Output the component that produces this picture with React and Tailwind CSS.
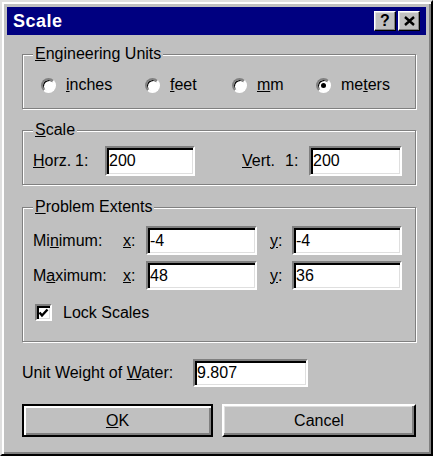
import React from 'react';

// Win95-style "Scale" dialog
const sunken =
  'border-2 border-t-[#808080] border-l-[#808080] border-r-white border-b-white shadow-[inset_2px_2px_0_#000,inset_-1px_-1px_0_#dfdfdf]';

const Radio = ({ checked, width, children }) => (
  <div className={`flex shrink-0 items-center ${width}`}>
    <span className="flex h-[15px] w-[15px] items-center justify-center rounded-full border-2 border-t-[#808080] border-l-[#808080] border-r-white border-b-white bg-white shadow-[inset_1px_1px_0_#000]">
      {checked && <span className="h-[5px] w-[5px] rounded-full bg-black" />}
    </span>
    <span className="ml-[10px]">{children}</span>
  </div>
);

const Field = ({ value, width, height = 'h-[29px]' }) => (
  <input
    type="text"
    defaultValue={value}
    className={`${width} ${height} ${sunken} shrink-0 bg-white pl-[2px] text-[16px] leading-none text-black outline-none`}
  />
);

const Group = ({ title, className, children }) => (
  <fieldset
    className={`w-[394px] border border-[#808080] pl-[10px] shadow-[1px_1px_0_#fff,inset_1px_1px_0_#fff] ${className}`}
  >
    <legend className="bg-[#c0c0c0] px-[2px] leading-[18px]">{title}</legend>
    {children}
  </fieldset>
);

const TitleButton = ({ children }) => (
  <div className="flex h-[20px] w-[22px] items-center justify-center border border-t-white border-l-white border-r-black border-b-black bg-[#c0c0c0] shadow-[inset_-1px_-1px_0_#808080,inset_1px_1px_0_#dfdfdf]">
    {children}
  </div>
);

export default function App() {
  return (
    <div className="min-h-screen bg-white font-['Liberation_Sans',Arial,sans-serif] text-[16px] text-black">
      <div className="flex h-[456px] w-[433px] flex-col border-2 border-t-[#dfdfdf] border-l-[#dfdfdf] border-r-black border-b-black bg-[#c0c0c0] p-[5px] shadow-[inset_2px_2px_0_#fff,inset_-2px_-2px_0_#808080]">
        {/* title bar */}
        <div className="flex h-[28px] items-center justify-between bg-[#000080] pl-[6px] pr-[6px]">
          <span className="text-[18px] font-bold tracking-[0.5px] text-white">Scale</span>
          <div className="flex gap-[2px]">
            <TitleButton>
              <span className="text-[16px] font-bold leading-none">?</span>
            </TitleButton>
            <TitleButton>
              <svg width="11" height="10" viewBox="0 0 11 10">
                <path d="M1 1 L10 9 M10 1 L1 9" stroke="#000" strokeWidth="2.4" />
              </svg>
            </TitleButton>
          </div>
        </div>

        <div className="flex flex-col pl-[15px] pt-[10px]">
          <Group
            title={<><u>E</u>ngineering Units</>}
            className="pt-[12px] pb-[13px]"
          >
            <div className="ml-[8px] flex h-[20px] items-center">
              <Radio width="w-[104px]"><u>i</u>nches</Radio>
              <Radio width="w-[87px]"><u>f</u>eet</Radio>
              <Radio width="w-[84px]"><u>m</u>m</Radio>
              <Radio checked>me<u>t</u>ers</Radio>
            </div>
          </Group>

          <Group title={<><u>S</u>cale</>} className="mt-[12px] pt-[7px] pb-[8px]">
            <div className="flex h-[30px] items-center">
              <span className="w-[42px] shrink-0 whitespace-nowrap"><u>H</u>orz.</span>
              <span className="w-[30px] shrink-0">1:</span>
              <Field value="200" width="w-[90px]" height="h-[30px]" />
              <span className="ml-[47px] w-[43px] shrink-0"><u>V</u>ert.</span>
              <span className="w-[24px] shrink-0">1:</span>
              <Field value="200" width="w-[93px]" height="h-[30px]" />
            </div>
          </Group>

          <Group
            title={<><u>P</u>roblem Extents</>}
            className="mt-[13px] pt-[10px] pb-[20px]"
          >
            <div className="flex items-center">
              <span className="w-[90px] shrink-0">Mi<u>n</u>imum:</span>
              <span className="w-[23px] shrink-0"><u>x</u>:</span>
              <Field value="-4" width="w-[111px]" />
              <span className="ml-[13px] w-[22px] shrink-0"><u>y</u>:</span>
              <Field value="-4" width="w-[110px]" />
            </div>
            <div className="mt-[6px] flex items-center">
              <span className="w-[90px] shrink-0">M<u>a</u>ximum:</span>
              <span className="w-[23px] shrink-0"><u>x</u>:</span>
              <Field value="48" width="w-[111px]" />
              <span className="ml-[13px] w-[22px] shrink-0"><u>y</u>:</span>
              <Field value="36" width="w-[110px]" />
            </div>
            <div className="ml-[2px] mt-[14px] flex h-[17px] items-center">
              <span className={`flex h-[17px] w-[17px] items-center justify-center bg-white ${sunken}`}>
                <svg width="11" height="10" viewBox="0 0 11 10">
                  <path d="M1.5 4.5 L4 7.5 L9.5 1.5" fill="none" stroke="#000" strokeWidth="2.4" />
                </svg>
              </span>
              <span className="ml-[11px]">Lock Scales</span>
            </div>
          </Group>

          <div className="mt-[17px] flex items-center">
            <span className="w-[171px] shrink-0">Unit Weight of <u>W</u>ater:</span>
            <Field value="9.807" width="w-[115px]" height="h-[28px]" />
          </div>

          <div className="mt-[17px] flex gap-[9px]">
            <button className="flex h-[33px] w-[191px] items-center justify-center border-2 border-black bg-[#c0c0c0] shadow-[inset_2px_2px_0_#fff,inset_-2px_-2px_0_#808080]">
              <span><u>O</u>K</span>
            </button>
            <button className="flex h-[33px] w-[194px] items-center justify-center border-2 border-t-white border-l-white border-r-black border-b-black bg-[#c0c0c0] shadow-[inset_-2px_-2px_0_#808080,inset_1px_1px_0_#dfdfdf]">
              Cancel
            </button>
          </div>
        </div>
      </div>
    </div>
  );
}
